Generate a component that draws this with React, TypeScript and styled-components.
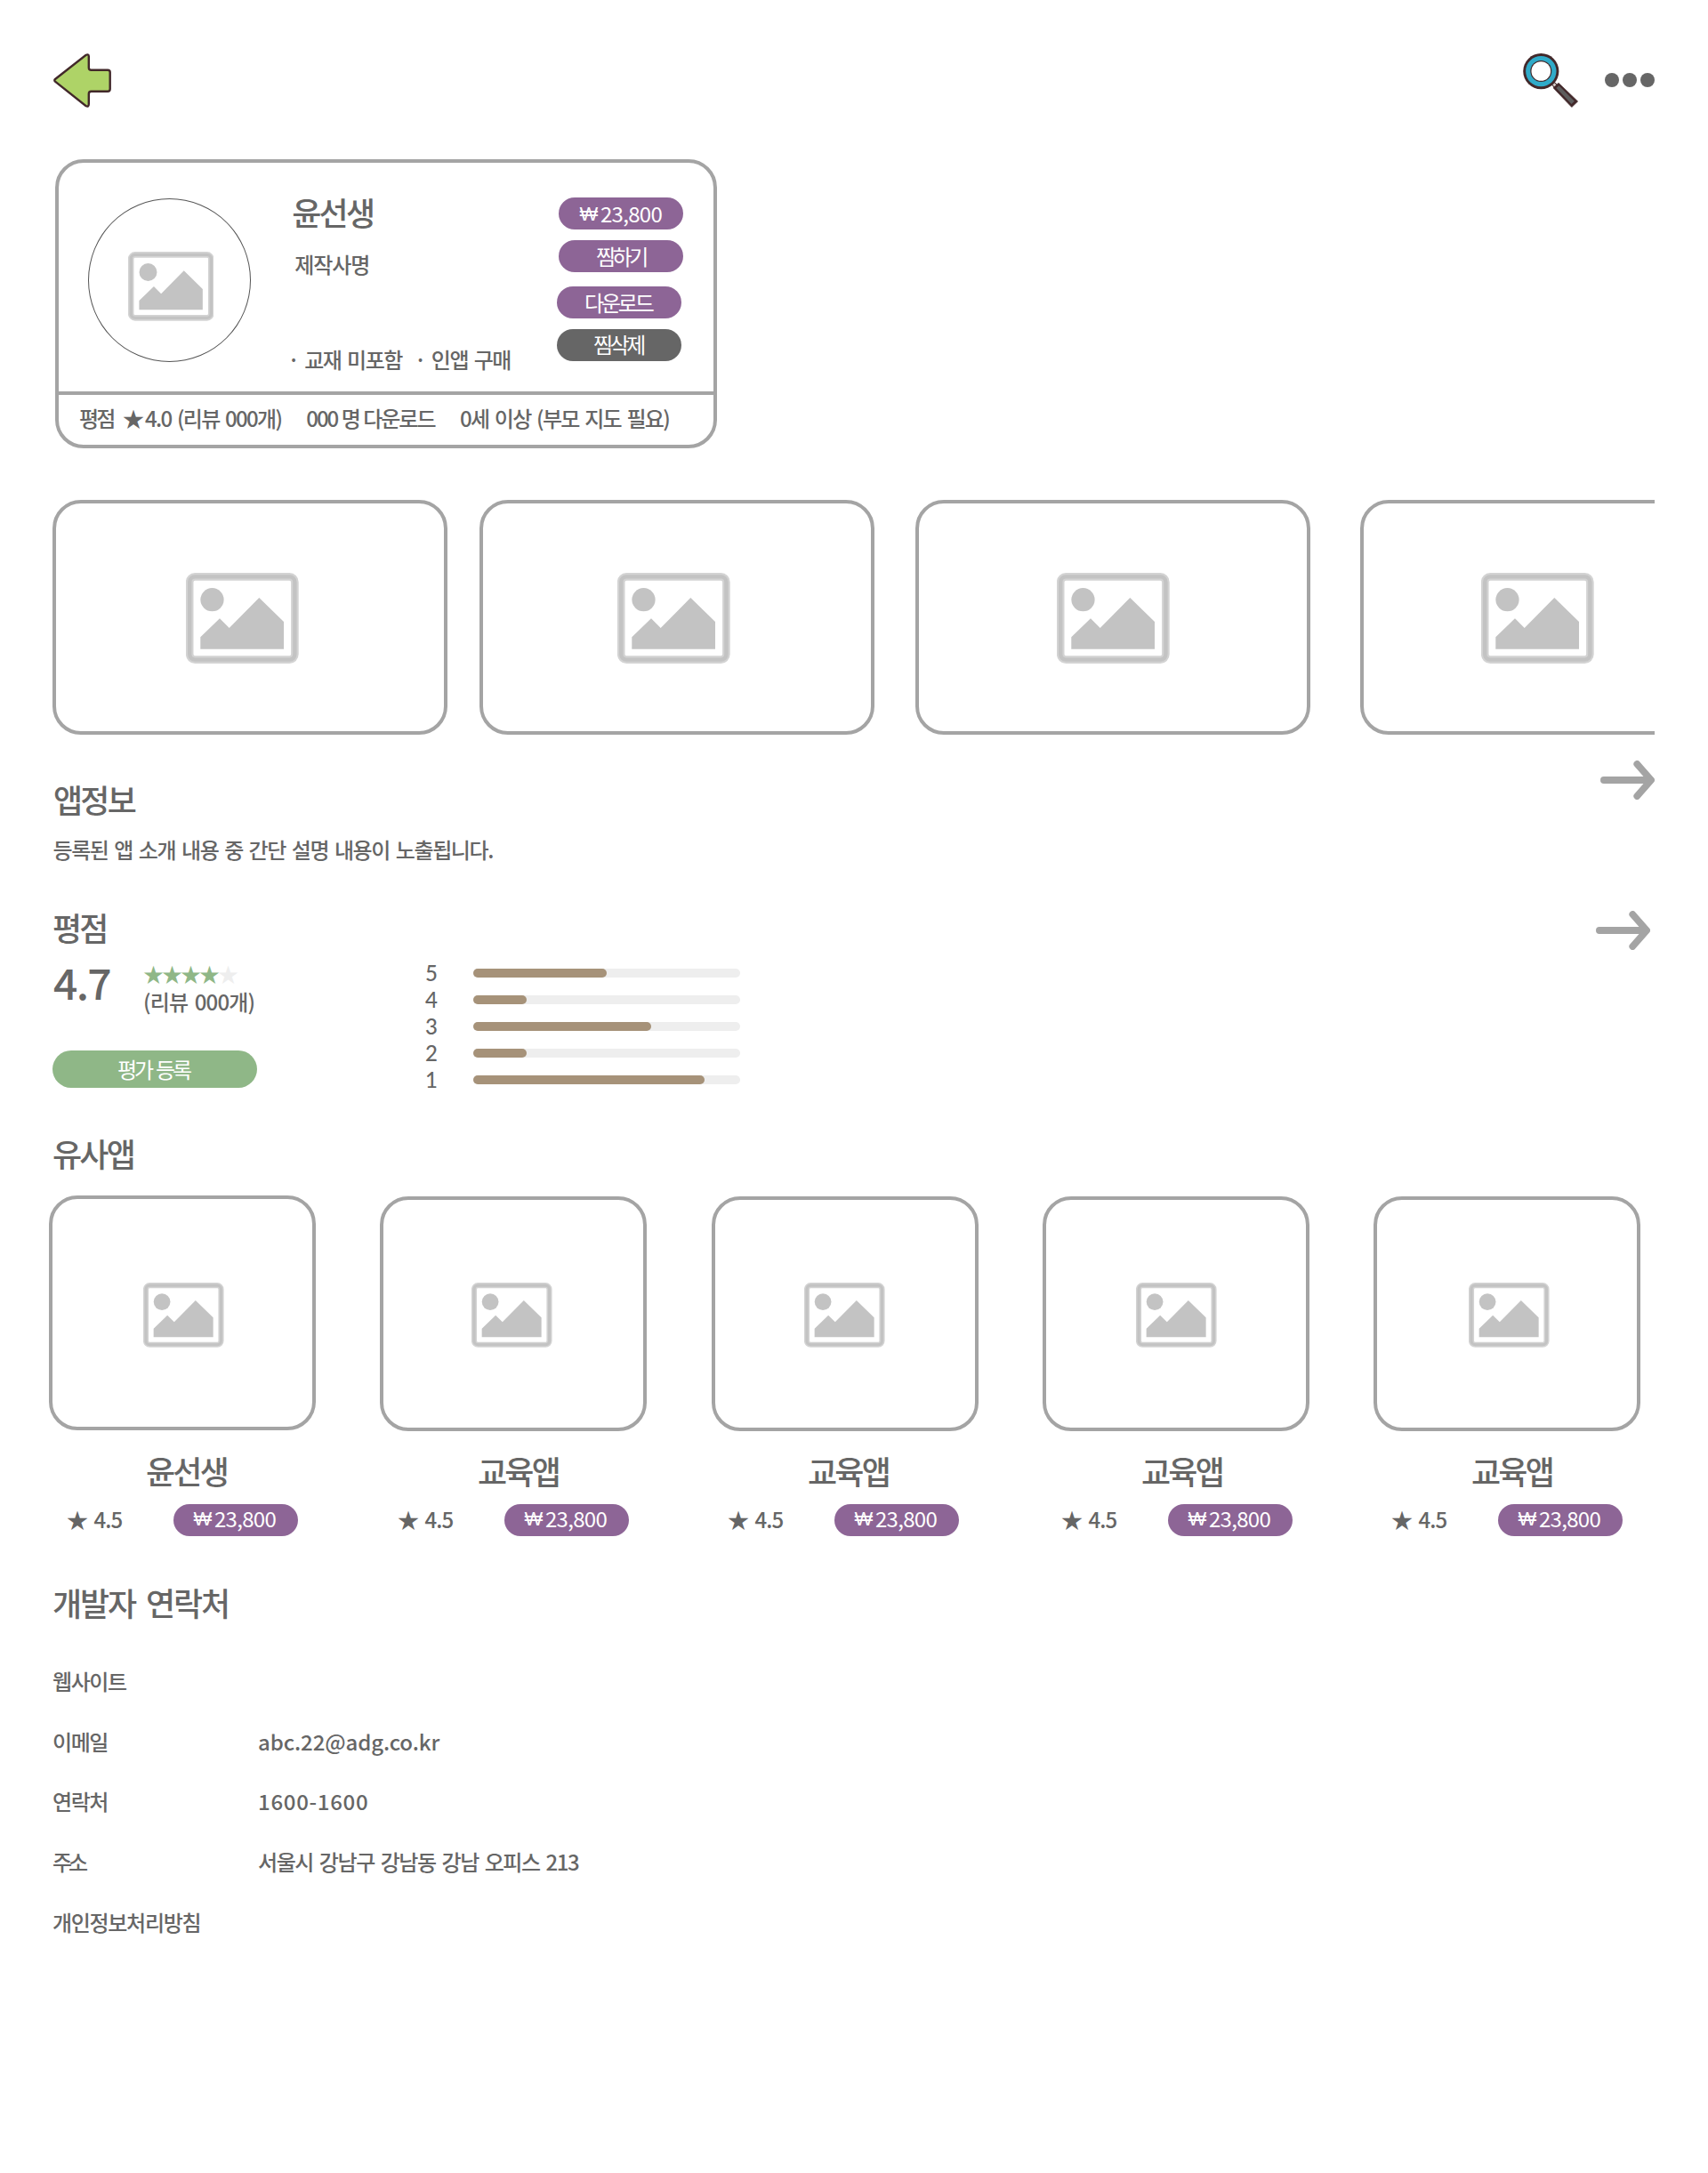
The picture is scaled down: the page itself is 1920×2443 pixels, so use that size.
import React from "react";
import styled, { createGlobalStyle } from "styled-components";

const ink = "#666666";
const line = "#a4a4a4";
const purple = "#8d6596";

const Global = createGlobalStyle`
  * { box-sizing: border-box; }
  body {
    margin: 0;
    background: #fff;
    color: ${ink};
    font-family: "Noto Sans CJK KR", "Noto Sans", sans-serif;
  }
`;

type TextProps = { $ls?: number; $ws?: number; $ml?: number };

const Body = styled.span<TextProps>`
  display: block;
  flex: none;
  font-size: 24px;
  line-height: 36px;
  font-weight: 500;
  white-space: pre;
  letter-spacing: ${(p) => p.$ls ?? -1.4}px;
  word-spacing: ${(p) => p.$ws ?? 2.8}px;
  margin-left: ${(p) => p.$ml ?? 0}px;
`;

const Heading = styled.h2<TextProps>`
  flex: none;
  margin: 0 0 0 ${(p) => p.$ml ?? -1}px;
  font-size: 36px;
  line-height: 48px;
  font-weight: 500;
  white-space: pre;
  letter-spacing: ${(p) => p.$ls ?? -2.8}px;
  word-spacing: ${(p) => p.$ws ?? 6}px;
`;

const Page = styled.main`
  width: 1920px;
  height: 2443px;
  padding: 60px 60px 0;
  overflow: hidden;
`;

const Header = styled.header`
  display: flex;
  align-items: center;
  height: 61px;
`;

const Tools = styled.div`
  display: flex;
  align-items: center;
  gap: 30px;
  margin-left: auto;
`;

const Dots = styled.div`
  display: flex;
  gap: 4px;
  padding-bottom: 1px;
`;

const Dot = styled.i`
  width: 16px;
  height: 16px;
  border-radius: 50%;
  background: ${ink};
`;

const Profile = styled.section`
  display: flex;
  flex-direction: column;
  width: 744px;
  height: 325px;
  margin: 58px 0 0 2px;
  border: 4px solid ${line};
  border-radius: 32px;
`;

const ProfileTop = styled.div`
  display: flex;
  height: 257px;
  padding: 39px 34px 0 33px;
`;

const Avatar = styled.div`
  display: flex;
  justify-content: center;
  width: 184px;
  height: 184px;
  padding: 59px 0 0 3px;
  border: 1px solid #555;
  border-radius: 50%;
  margin-top: 1px;
`;

const Identity = styled.div`
  display: flex;
  flex-direction: column;
  width: 300px;
  margin: -8px 0 0 45px;
`;

const Maker = styled(Body)`
  margin: 17px 0 0 4px;
`;

const Notes = styled.div`
  display: flex;
  margin: 71px 0 0 -4px;
`;

const Actions = styled.div`
  display: flex;
  flex-direction: column;
  margin-left: auto;
`;

type PillProps = {
  $bg?: string;
  $w?: number;
  $h?: number;
  $mt?: number;
  $shift?: number;
  $ls?: number;
  $ws?: number;
  $pl?: number;
  $lift?: number;
};

const Pill = styled.button<PillProps>`
  display: flex;
  align-items: center;
  flex: none;
  width: ${(p) => p.$w ?? 140}px;
  height: ${(p) => p.$h ?? 36}px;
  margin: ${(p) => p.$mt ?? 0}px 0 0 ${(p) => p.$shift ?? 0}px;
  padding: 0 0 ${(p) => p.$lift ?? 0}px ${(p) => p.$pl ?? 22}px;
  border: 0;
  border-radius: 21px;
  background: ${(p) => p.$bg ?? purple};
  color: #fff;
  font: 400 24px/30px "Noto Sans CJK KR", "Noto Sans", sans-serif;
  letter-spacing: ${(p) => p.$ls ?? -0.7}px;
  word-spacing: ${(p) => p.$ws ?? 0}px;
  white-space: pre;
`;

const Won = styled.span`
  flex: none;
  width: 26px;
  padding-top: 2px;
  font-family: "Liberation Sans", sans-serif;
  font-size: 22px;
  letter-spacing: 0;
`;

const ProfileMeta = styled.div`
  display: flex;
  align-items: center;
  height: 60px;
  padding: 0 0 5px 23px;
  border-top: 4px solid ${line};
`;

const Gallery = styled.section`
  display: flex;
  height: 264px;
  margin: 58px 0 0 -1px;
  overflow: hidden;
`;

const Shot = styled.div<{ $gap: number; $inset: number }>`
  flex: none;
  width: 444px;
  height: 264px;
  margin-left: ${(p) => p.$gap}px;
  padding: 77.5px 0 0 ${(p) => p.$inset - 4}px;
  border: 4px solid ${line};
  border-radius: 32px;
`;

const SectionRow = styled.div`
  display: flex;
  justify-content: space-between;
  align-items: flex-start;
`;

const RatingHead = styled(SectionRow)`
  height: 48px;
`;

const Info = styled.section`
  height: 163px;
  margin-top: 24px;
`;

const InfoTitle = styled(Heading)`
  margin-top: 24px;
`;

const InfoText = styled(Body)`
  margin: 15px 0 0 -0.5px;
`;

const ArrowSlot = styled.div<{ $top: number; $right: number }>`
  display: flex;
  margin: ${(p) => p.$top}px ${(p) => p.$right}px 0 0;
`;

const Ratings = styled.section`
  height: 259px;
  padding-top: 5px;
`;

const RatingBody = styled.div`
  display: flex;
  align-items: flex-start;
`;

const Summary = styled.div`
  width: 418px;
`;

const ScoreLine = styled.div`
  display: flex;
  height: 115px;
`;

const Score = styled.strong`
  width: 101px;
  font-size: 48px;
  line-height: 60px;
  font-weight: 500;
  letter-spacing: -1.7px;
  margin-top: 7px;
`;

const StarsColumn = styled.div`
  padding-top: 13px;
`;

const Stars = styled.div`
  display: flex;
  height: 29px;
  font-size: 23px;
  line-height: 30px;
  letter-spacing: -2px;
  color: #8fb787;
`;

const EmptyStar = styled.span`
  color: #eeeeee;
`;

const Bars = styled.div`
  display: flex;
  flex-direction: column;
  padding-top: 13px;
`;

const BarRow = styled.div`
  display: flex;
  align-items: center;
  height: 30px;
`;

const BarLabel = styled.span`
  width: 54px;
  font: 500 24px/28px Lato, sans-serif;
`;

const Track = styled.div`
  width: 300px;
  height: 10px;
  border-radius: 5px;
  background: #eeeeee;
`;

const Fill = styled.div`
  height: 10px;
  border-radius: 5px;
  background: #a69279;
`;

const Similar = styled.section`
  height: 505px;
`;

const AppGrid = styled.div`
  display: flex;
  gap: 72px;
  margin: 24px 0 0 -5px;
`;

const AppCard = styled.article<{ $up: number; $nudge: number }>`
  display: flex;
  flex-direction: column;
  flex: none;
  width: 300px;
  padding-top: ${(p) => 1 - p.$up}px;
  margin-right: ${(p) => p.$nudge}px;
`;

const AppFrame = styled.div<{ $inset: number; $up: number }>`
  height: 264px;
  margin-bottom: ${(p) => 20 + p.$up}px;
  padding: ${(p) => 93 + p.$up}px 0 0 ${(p) => p.$inset - 4}px;
  border: 4px solid ${line};
  border-radius: 32px;
`;

const AppMeta = styled.div<{ $x: number }>`
  display: flex;
  align-items: flex-start;
  margin: 14px 0 0 ${(p) => p.$x}px;
`;

const RatingText = styled(Body)`
  width: 118px;
  margin-top: -1px;
`;

const Contact = styled.section`
  padding-top: 0;
`;

const ContactList = styled.dl`
  display: grid;
  grid-template-columns: 231px auto;
  grid-auto-rows: 67.7px;
  margin: 47px 0 0 -1px;
`;

const Term = styled.dt``;
const Value = styled.dd`
  margin: 0;
`;

const Picture = ({ width }: { width: number }) => (
  <svg width={width} height={(width * 102) / 126.6} viewBox="0 0 126.6 102" style={{ display: "block" }}>
    <rect x="4.2" y="4.4" width="118.2" height="93.2" rx="6" fill="none" stroke="#d3d3d3" strokeWidth="8.6" />
    <rect x="4.2" y="4.4" width="118.2" height="93.2" rx="6" fill="none" stroke="#c3c3c3" strokeWidth="4.4" />
    <circle cx="29.5" cy="30.2" r="13.1" fill="#c3c3c3" />
    <path d="M16.3 85.7V72.3L38 51.3L48.7 62L82.3 28L110 55V85.7Z" fill="#c3c3c3" />
  </svg>
);

const Forward = () => (
  <svg width="61" height="44" viewBox="0 0 61 44" fill="none" stroke={line} strokeWidth="7.8" strokeLinecap="round" strokeLinejoin="round">
    <path d="M3.9 22H55M41.3 4L57.1 22L41.3 40" />
  </svg>
);

const BackIcon = () => (
  <svg width="65" height="61" viewBox="0 0 65 61">
    <path
      d="M2 29L36.4 2Q39.8.3 39.8 3.5V16Q39.8 18.7 42.5 18.7H61Q63.7 18.7 63.7 21.2V40Q63.7 42.7 61 42.7H42.5Q39.8 42.7 39.8 45.4V57Q39.8 60.8 36.4 59L2 31.6Q.6 30.3 2 29Z"
      fill="#aed367"
      stroke="#42282a"
      strokeWidth="2.4"
    />
  </svg>
);

const SearchIcon = () => (
  <svg width="62" height="61" viewBox="0 0 62 61">
    <path d="M33 33L39 39" stroke="#42282a" strokeWidth="5" />
    <path d="M33 33L39 39" stroke="#d6cfcc" strokeWidth="3" />
    <circle cx="20.3" cy="20.1" r="20.1" fill="#42282a" />
    <circle cx="20.3" cy="20.1" r="17.2" fill="#30abc9" />
    <circle cx="20.3" cy="20" r="12" fill="#42282a" />
    <circle cx="20.3" cy="20" r="10.8" fill="#fff" />
    <path d="M34 38.8L40 33.2L61.7 54L54.8 60.6Z" fill="#42282a" stroke="#42282a" strokeWidth=".6" />
    <path d="M37.4 39L40.4 36.2L57.8 53.8L54.6 57Z" fill="#5d5d5d" />
  </svg>
);

const Price = (props: PillProps) => (
  <Pill {...props}>
    <Won>₩</Won>
    <span>23,800</span>
  </Pill>
);

const shots = [
  { gap: 0, inset: 150 },
  { gap: 36, inset: 155 },
  { gap: 46, inset: 159 },
  { gap: 56, inset: 136 },
];

const bars = [
  { label: "5", value: 150 },
  { label: "4", value: 60 },
  { label: "3", value: 200 },
  { label: "2", value: 60 },
  { label: "1", value: 260 },
];

const apps = [
  { name: "윤선생", icon: 106, title: 109, meta: 20, up: 1, nudge: 0 },
  { name: "교육앱", icon: 103, title: 110, meta: 20, up: 0, nudge: 1 },
  { name: "교육앱", icon: 104, title: 108, meta: 18, up: 0, nudge: 0 },
  { name: "교육앱", icon: 105, title: 111, meta: 21, up: 0, nudge: 0 },
  { name: "교육앱", icon: 107, title: 110, meta: 20, up: 0, nudge: 0 },
];

const contacts: { term: string; value: string; termLs?: number; valueLs?: number }[] = [
  { term: "웹사이트", value: "" },
  { term: "이메일", value: "abc.22@adg.co.kr", valueLs: -0.1 },
  { term: "연락처", value: "1600-1600", valueLs: 0.7 },
  { term: "주소", value: "서울시 강남구 강남동 강남 오피스 213", termLs: -4 },
  { term: "개인정보처리방침", value: "", termLs: -1.3 },
];

export default function App() {
  return (
    <Page>
      <Global />
      <Header>
        <BackIcon />
        <Tools>
          <SearchIcon />
          <Dots>
            <Dot />
            <Dot />
            <Dot />
          </Dots>
        </Tools>
      </Header>

      <Profile>
        <ProfileTop>
          <Avatar>
            <Picture width={96.5} />
          </Avatar>
          <Identity>
            <Heading $ml={1}>윤선생</Heading>
            <Maker $ls={-1.1}>제작사명</Maker>
            <Notes>
              <Body $ls={-1.5}>· 교재 미포함</Body>
              <Body $ml={14} $ls={-1.5}>· 인앱 구매</Body>
            </Notes>
          </Identity>
          <Actions>
            <Price $shift={2} $lift={1} $pl={21} />
            <Pill $shift={2} $mt={12} $pl={42} $ls={-3.5} $lift={1}>찜하기</Pill>
            <Pill $mt={16} $pl={31} $ls={-3.2} $lift={1}>다운로드</Pill>
            <Pill $mt={12} $pl={41} $ls={-3.5} $lift={2} $bg={ink}>찜삭제</Pill>
          </Actions>
        </ProfileTop>
        <ProfileMeta>
          <Body $ls={-2.8}>평점</Body>
          <Body $ml={10.5} $ls={-2}>★</Body>
          <Body $ml={3} $ls={-1.7}>4.0 (리뷰 000개)</Body>
          <Body $ml={28} $ls={-2} $ws={1}>000 명 다운로드</Body>
          <Body $ml={28.5} $ls={-1.7}>0세 이상 (부모 지도 필요)</Body>
        </ProfileMeta>
      </Profile>

      <Gallery>
        {shots.map((s, i) => (
          <Shot key={i} $gap={s.gap} $inset={s.inset}>
            <Picture width={126.6} />
          </Shot>
        ))}
      </Gallery>

      <Info>
        <SectionRow>
          <InfoTitle $ml={0}>앱정보</InfoTitle>
          <ArrowSlot $top={5} $right={0}>
            <Forward />
          </ArrowSlot>
        </SectionRow>
        <InfoText>등록된 앱 소개 내용 중 간단 설명 내용이 노출됩니다.</InfoText>
      </Info>

      <Ratings>
        <RatingHead>
          <Heading>평점</Heading>
          <ArrowSlot $top={6} $right={5}>
            <Forward />
          </ArrowSlot>
        </RatingHead>
        <RatingBody>
          <Summary>
            <ScoreLine>
              <Score>4.7</Score>
              <StarsColumn>
                <Stars>
                  ★★★★<EmptyStar>★</EmptyStar>
                </Stars>
                <Body $ls={-0.8}>(리뷰 000개)</Body>
              </StarsColumn>
            </ScoreLine>
            <Pill $bg="#8fb787" $w={230} $h={42} $shift={-1} $pl={73} $ls={-3} $ws={2.5} $lift={1}>평가 등록</Pill>
          </Summary>
          <Bars>
            {bars.map((b) => (
              <BarRow key={b.label}>
                <BarLabel>{b.label}</BarLabel>
                <Track>
                  <Fill style={{ width: b.value }} />
                </Track>
              </BarRow>
            ))}
          </Bars>
        </RatingBody>
      </Ratings>

      <Similar>
        <Heading>유사앱</Heading>
        <AppGrid>
          {apps.map((a, i) => (
            <AppCard key={i} $up={a.up} $nudge={a.nudge}>
              <AppFrame $inset={a.icon} $up={a.up}>
                <Picture width={90.5} />
              </AppFrame>
              <Heading $ml={a.title}>{a.name}</Heading>
              <AppMeta $x={a.meta}>
                <RatingText $ls={-0.9}>★ 4.5</RatingText>
                <Price $shift={2} $lift={5} $pl={20} />
              </AppMeta>
            </AppCard>
          ))}
        </AppGrid>
      </Similar>

      <Contact>
        <Heading $ls={-2.1}>개발자 연락처</Heading>
        <ContactList>
          {contacts.map((c) => (
            <React.Fragment key={c.term}>
              <Term>
                <Body $ls={c.termLs}>{c.term}</Body>
              </Term>
              <Value>
                <Body $ls={c.valueLs}>{c.value}</Body>
              </Value>
            </React.Fragment>
          ))}
        </ContactList>
      </Contact>
    </Page>
  );
}
